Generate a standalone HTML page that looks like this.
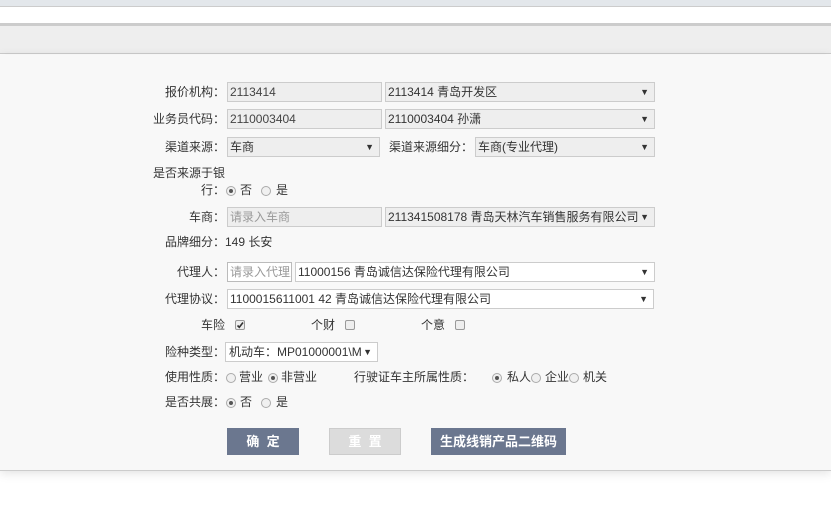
<!DOCTYPE html>
<html><head><meta charset="utf-8"><style>
*{box-sizing:border-box;margin:0;padding:0}
body{width:831px;height:527px;background:#fff;position:relative;overflow:hidden;font-family:"Liberation Sans","Noto Sans CJK SC",sans-serif;font-size:12px;color:#333}
.a{position:absolute;white-space:nowrap;line-height:14px}
.box{position:absolute;border:1px solid #ccc;height:20px;line-height:18px;padding-left:2px;background:#fff;overflow:hidden;white-space:nowrap}
.g{background:#eee}
.sel:after{content:"▼";position:absolute;right:5px;top:0;font-size:9px;color:#333}
.r{position:absolute;width:10px;height:10px;border:1px solid #aaa;border-radius:50%;background:#f0f0f0}
.r.on:after{content:"";position:absolute;left:2px;top:2px;width:4px;height:4px;border-radius:50%;background:#555}
.c{position:absolute;width:10px;height:10px;border:1px solid #999;border-radius:2px;background:#eee}
.btn{position:absolute;top:428px;height:27px;line-height:27px;text-align:center;color:#fff;font-size:13px;font-weight:bold}
</style></head><body>
<div style="position:absolute;left:0;top:0;width:831px;height:6px;background:#e3e7eb"></div>
<div style="position:absolute;left:0;top:6px;width:831px;height:1px;background:#ccc"></div>
<div style="position:absolute;left:0;top:23px;width:831px;height:3px;background:#ccc"></div>
<div style="position:absolute;left:0;top:26px;width:831px;height:28px;background:#eee;border-bottom:1px solid #ccc"></div>
<div style="position:absolute;left:0;top:55px;width:831px;height:416px;background:#f8f8f8;border-bottom:1px solid #ccc;box-shadow:0 2px 10px rgba(0,0,0,0.12)"></div>

<div class="a" style="left:165px;top:85px">报价机构：</div>
<div class="box g" style="left:227px;top:82px;width:155px;color:#444">2113414</div>
<div class="box g sel" style="left:385px;top:82px;width:270px">2113414 青岛开发区</div>

<div class="a" style="left:153px;top:112px">业务员代码：</div>
<div class="box g" style="left:227px;top:109px;width:155px;color:#444">2110003404</div>
<div class="box g sel" style="left:385px;top:109px;width:270px">2110003404 孙潇</div>

<div class="a" style="left:165px;top:140px">渠道来源：</div>
<div class="box g sel" style="left:227px;top:137px;width:153px">车商</div>
<div class="a" style="left:389px;top:140px">渠道来源细分：</div>
<div class="box g sel" style="left:475px;top:137px;width:180px">车商(专业代理)</div>

<div class="a" style="left:153px;top:166px">是否来源于银</div>
<div class="a" style="left:201px;top:183px">行：</div>
<div class="r on" style="left:226px;top:186px"></div><div class="a" style="left:240px;top:183px">否</div>
<div class="r" style="left:261px;top:186px"></div><div class="a" style="left:276px;top:183px">是</div>

<div class="a" style="left:189px;top:210px">车商：</div>
<div class="box g" style="left:227px;top:207px;width:155px;color:#999">请录入车商</div>
<div class="box g sel" style="left:385px;top:207px;width:270px">211341508178 青岛天林汽车销售服务有限公司</div>

<div class="a" style="left:165px;top:235px">品牌细分：149 长安</div>

<div class="a" style="left:177px;top:265px">代理人：</div>
<div class="box" style="left:227px;top:262px;width:65px;color:#999;border-color:#bbb">请录入代理人</div>
<div class="box sel" style="left:295px;top:262px;width:360px">11000156 青岛诚信达保险代理有限公司</div>

<div class="a" style="left:165px;top:292px">代理协议：</div>
<div class="box sel" style="left:227px;top:289px;width:427px">1100015611001 42 青岛诚信达保险代理有限公司</div>

<div class="a" style="left:201px;top:318px">车险</div>
<div class="c" style="left:235px;top:320px"><svg width="8" height="8" style="position:absolute;left:0;top:0"><path d="M1.5 4.5 L3.3 6.3 L7 1.5" stroke="#333" stroke-width="1.6" fill="none"/></svg></div>
<div class="a" style="left:311px;top:318px">个财</div><div class="c" style="left:345px;top:320px"></div>
<div class="a" style="left:421px;top:318px">个意</div><div class="c" style="left:455px;top:320px"></div>

<div class="a" style="left:165px;top:345px">险种类型：</div>
<div class="box sel" style="left:225px;top:342px;width:153px;padding-left:3px">机动车：MP01000001\M&nbsp;&nbsp;&nbsp;</div>

<div class="a" style="left:165px;top:370px">使用性质：</div>
<div class="r" style="left:226px;top:373px"></div><div class="a" style="left:239px;top:370px">营业</div>
<div class="r on" style="left:268px;top:373px"></div><div class="a" style="left:281px;top:370px">非营业</div>
<div class="a" style="left:354px;top:370px">行驶证车主所属性质：</div>
<div class="r on" style="left:492px;top:373px"></div><div class="a" style="left:507px;top:370px">私人</div>
<div class="r" style="left:531px;top:373px"></div><div class="a" style="left:545px;top:370px">企业</div>
<div class="r" style="left:569px;top:373px"></div><div class="a" style="left:583px;top:370px">机关</div>

<div class="a" style="left:165px;top:395px">是否共展：</div>
<div class="r on" style="left:226px;top:398px"></div><div class="a" style="left:240px;top:395px">否</div>
<div class="r" style="left:261px;top:398px"></div><div class="a" style="left:276px;top:395px">是</div>

<div class="btn" style="left:227px;width:72px;background:#6b778f">确&nbsp;&nbsp;定</div>
<div class="btn" style="left:329px;width:72px;background:#dcdcdc;border:1px solid #ccc;line-height:25px">重&nbsp;&nbsp;置</div>
<div class="btn" style="left:431px;width:135px;background:#6b778f">生成线销产品二维码</div>
</body></html>
